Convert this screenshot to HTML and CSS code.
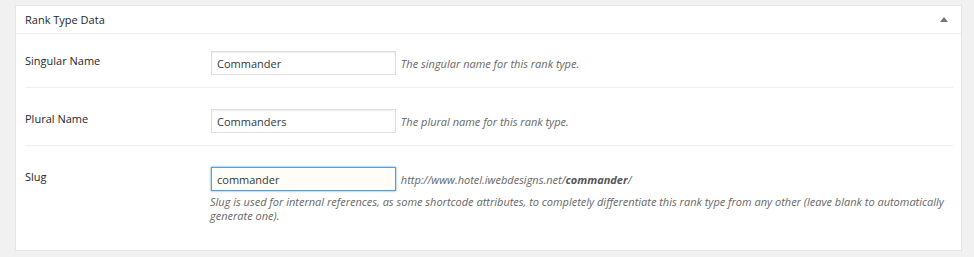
FILE: index.html
```html
<!DOCTYPE html>
<html lang="en">
<head>
  <meta charset="UTF-8" />
  <title>Rank Type Data</title>
  <link rel="stylesheet" href="styles.css">
</head>
<body>
  <div class="postbox">
    <div class="postbox-header">
      <h2>Rank Type Data</h2>
      <span class="toggle-arrow"></span>
    </div>

    <div class="inside">
      <div class="field-row first">
        <label class="field-label" for="singular-name">Singular Name</label>
        <div class="field-body">
          <input id="singular-name" class="text-input" type="text" value="Commander" />
          <span class="description">The singular name for this rank type.</span>
        </div>
      </div>

      <div class="field-row">
        <label class="field-label" for="plural-name">Plural Name</label>
        <div class="field-body">
          <input id="plural-name" class="text-input" type="text" value="Commanders" />
          <span class="description">The plural name for this rank type.</span>
        </div>
      </div>

      <div class="field-row last">
        <label class="field-label" for="slug">Slug</label>
        <div class="field-body">
          <input id="slug" class="text-input focused" type="text" value="commander" />
          <span class="description">http://www.hotel.iwebdesigns.net/<strong>commander</strong>/</span>
          <p class="description block">Slug is used for internal references, as some shortcode attributes, to completely differentiate this rank type from any other (leave blank to automatically generate one).</p>
        </div>
      </div>
    </div>
  </div>
</body>
</html>
```

FILE: styles.css
```css
* {
  margin: 0;
  padding: 0;
  box-sizing: border-box;
}

body {
  background: #f1f1f1;
  padding: 5px 12px 0 15px;
  font-family: "Open Sans", sans-serif;
  font-size: 11px;
  color: #23282d;
}

.postbox {
  background: #fff;
  border: 1px solid #e5e5e5;
  box-shadow: 0 1px 1px rgba(0, 0, 0, 0.04);
  width: 947px;
}

.postbox-header {
  display: flex;
  align-items: center;
  justify-content: space-between;
  height: 28px;
  padding: 0 13px 0 9px;
  border-bottom: 1px solid #eee;
}

.postbox-header h2 {
  font-size: 11px;
  font-weight: normal;
  color: #23282d;
}

.toggle-arrow {
  width: 0;
  height: 0;
  border-left: 4px solid transparent;
  border-right: 4px solid transparent;
  border-bottom: 5px solid #72777c;
  margin-top: -1px;
}

.inside {
  padding: 0 8px 0 9px;
}

.field-row {
  display: flex;
  padding: 21px 0 12px;
  border-bottom: 1px solid #eee;
}

.field-row.first {
  padding-top: 17px;
}

.field-row.last {
  border-bottom: none;
  padding-bottom: 27px;
}

.field-label {
  width: 186px;
  flex-shrink: 0;
  padding-top: 1px;
  font-size: 11px;
  line-height: 17px;
}

.field-body {
  flex: 1;
}

.text-input {
  width: 185px;
  height: 24px;
  padding: 2px 5px;
  border: 1px solid #ddd;
  box-shadow: inset 0 1px 2px rgba(0, 0, 0, 0.07);
  background: #fff;
  font-family: "Open Sans", sans-serif;
  font-size: 11px;
  color: #32373c;
  vertical-align: middle;
  outline: none;
}

.text-input.focused {
  border-color: #5b9dd9;
  background: #fffdf5;
  box-shadow: 0 0 2px rgba(30, 140, 190, 0.8);
}

.description {
  font-style: italic;
  font-size: 11px;
  color: #666;
  margin-left: 2px;
  vertical-align: middle;
}

.description strong {
  color: #555;
}

.description.block {
  display: block;
  margin: 4px 0 0 -1px;
  line-height: 14px;
  max-width: 741px;
}
```
